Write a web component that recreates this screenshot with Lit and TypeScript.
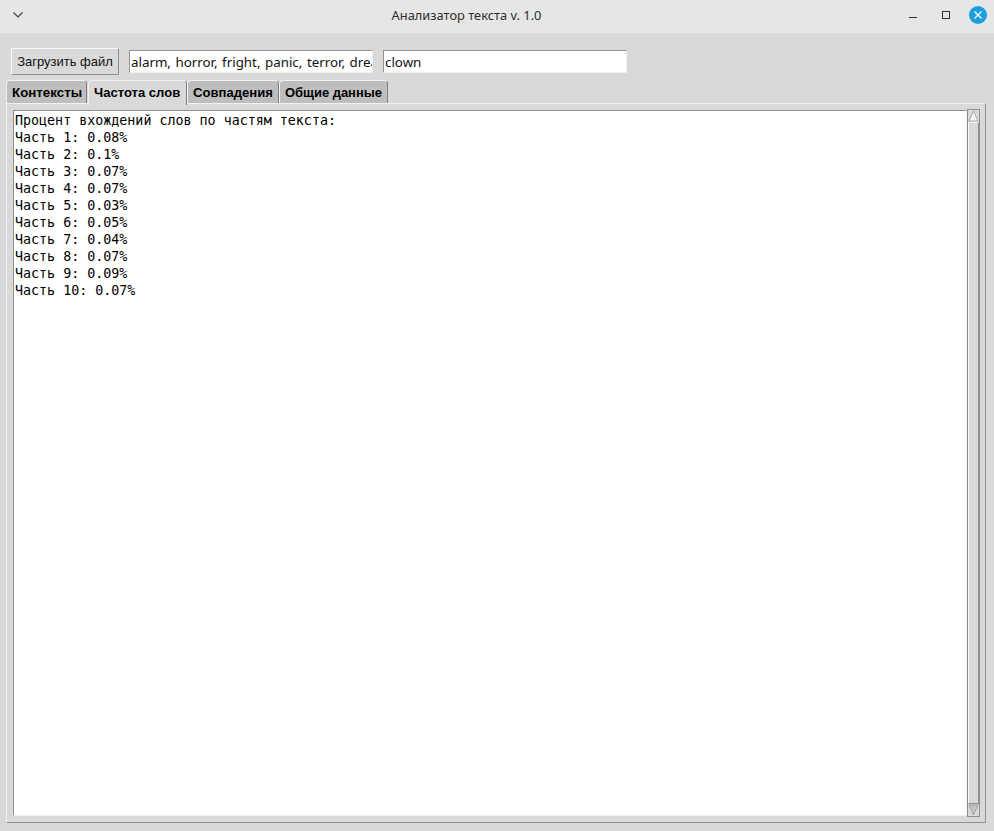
import { LitElement, html, css, svg } from "lit";
import { customElement } from "lit/decorators.js";

const lines = [
  "Процент вхождений слов по частям текста:",
  "Часть 1: 0.08%", "Часть 2: 0.1%", "Часть 3: 0.07%", "Часть 4: 0.07%", "Часть 5: 0.03%",
  "Часть 6: 0.05%", "Часть 7: 0.04%", "Часть 8: 0.07%", "Часть 9: 0.09%", "Часть 10: 0.07%",
];
const tabs = ["Контексты", "Частота слов", "Совпадения", "Общие данные"];

@customElement("app-root")
export class AppRoot extends LitElement {
  static styles = css`
    :host { display: block; width: 994px; height: 831px; background: #d9d9d9; overflow: hidden; font-family: "Noto Sans", sans-serif; color: #000; }
    .title { height: 33px; background: #e6e6e6; position: relative; }
    .title .name { line-height: 31px; text-align: center; font-size: 12.85px; color: #2e2e2e; padding-right: 61px; }
    .title svg { position: absolute; }
    .menu { left: 12px; top: 10px; }
    .min { left: 909px; top: 10px; }
    .max { left: 941px; top: 10px; }
    .close { left: 969px; top: 6px; }
    .toolbar { display: flex; align-items: flex-start; padding: 15px 0 0 11px; height: 27px; }
    .btn { box-sizing: border-box; width: 108px; height: 27px; background: #d9d9d9; border: 1px solid; border-color: #f7f7f7 #8f8f8f #8f8f8f #f7f7f7; font: 13px/26px "Liberation Sans", sans-serif; text-align: center; color: #111; white-space: nowrap; }
    .entry { box-sizing: border-box; width: 244px; height: 23px; margin: 2px 0 0 10px; background: #fff; border: 1px solid; border-color: #949494 #f0f0f0 #f0f0f0 #949494; font-size: 13.33px; line-height: 22px; padding-left: 1px; overflow: hidden; white-space: nowrap; color: #111; word-spacing: 1.1px; }
    .tabs { display: flex; margin: 5px 0 0 6px; height: 23px; align-items: flex-start; position: relative; z-index: 1; }
    .tab { box-sizing: border-box; height: 23px; background: #bebebe; border: 1px solid; border-color: #f2f2f2 #7f7f7f transparent #f2f2f2; border-bottom: none; border-radius: 4px 4px 0 0; font: bold 13.1px/21px "Liberation Sans", sans-serif; padding: 1px 0 0 5px; color: #000; white-space: nowrap; }
    .tab.on { background: #d9d9d9; height: 25px; margin-left: 1px; }
    .t0 { width: 81px; font-size: 13.33px; }
    .t1 { width: 99px; font-size: 13.05px; }
    .t2 { width: 92px; font-size: 13.1px; }
    .t3 { width: 109px; font-size: 12.95px; }
    .panel { box-sizing: border-box; margin: 0 8px 0 6px; height: 720px; border: 1px solid; border-color: #f2f2f2 #8f8f8f #8f8f8f #f2f2f2; padding: 6px 5px 6px 6px; display: flex; }
    .text { box-sizing: border-box; width: 954px; flex: none; border: 1px solid; border-color: #8f8f8f #f2f2f2 #f2f2f2 #8f8f8f; background: #fff; font: 13.33px/17px "DejaVu Sans Mono", monospace; padding: 1px 0 0 1px; white-space: pre; color: #000; }
    .scroll { box-sizing: border-box; width: 13px; flex: none; margin: -1px 0 -1px 0; background: #bebebe; border: 1px solid #8f8f8f; display: flex; flex-direction: column; }
    .arrow { width: 11px; height: 12px; flex: none; background: #d9d9d9; display: block; }
    .thumb { flex: 1; background: #d9d9d9; border: 1px solid; border-color: #f7f7f7 #8f8f8f #8f8f8f #f7f7f7; }
  `;

  render() {
    return html`
      <div class="title">
        <svg class="menu" width="12" height="10" viewBox="0 0 12 10"><path d="M1.5 2.5 6 7l4.5-4.5" fill="none" stroke="#3a3a3a" stroke-width="1.1"/></svg>
        <div class="name">Анализатор текста v. 1.0</div>
        <svg class="min" width="10" height="10" viewBox="0 0 10 10"><path d="M0 7.5h8" stroke="#333" stroke-width="1"/></svg>
        <svg class="max" width="10" height="10" viewBox="0 0 10 10"><rect x="1.5" y="1.5" width="7" height="7" fill="none" stroke="#333" stroke-width="1"/></svg>
        <svg class="close" width="18" height="18" viewBox="0 0 18 18"><circle cx="9" cy="9" r="9" fill="#1f9ede"/><path d="M5.5 5.5l7 7M12.5 5.5l-7 7" stroke="#fff" stroke-width="1.2"/></svg>
      </div>
      <div class="toolbar">
        <div class="btn">Загрузить файл</div>
        <div class="entry">alarm, horror, fright, panic, terror, dread, fear</div>
        <div class="entry">clown</div>
      </div>
      <div class="tabs">
        ${tabs.map((t, i) => html`<div class="tab t${i} ${i === 1 ? "on" : ""}">${t}</div>`)}
      </div>
      <div class="panel">
        <div class="text">${lines.join("\n")}</div>
        <div class="scroll">
          <svg class="arrow" viewBox="0 0 11 12">${svg`<path d="M5.5 1 10 11H1z" fill="#f7f7f7" stroke="#8f8f8f" stroke-width=".7"/>`}</svg>
          <div class="thumb"></div>
          <svg class="arrow" viewBox="0 0 11 12">${svg`<path d="M5.5 11 10 1H1z" fill="#c4c4c4" stroke="#8f8f8f" stroke-width=".7"/>`}</svg>
        </div>
      </div>
    `;
  }
}
